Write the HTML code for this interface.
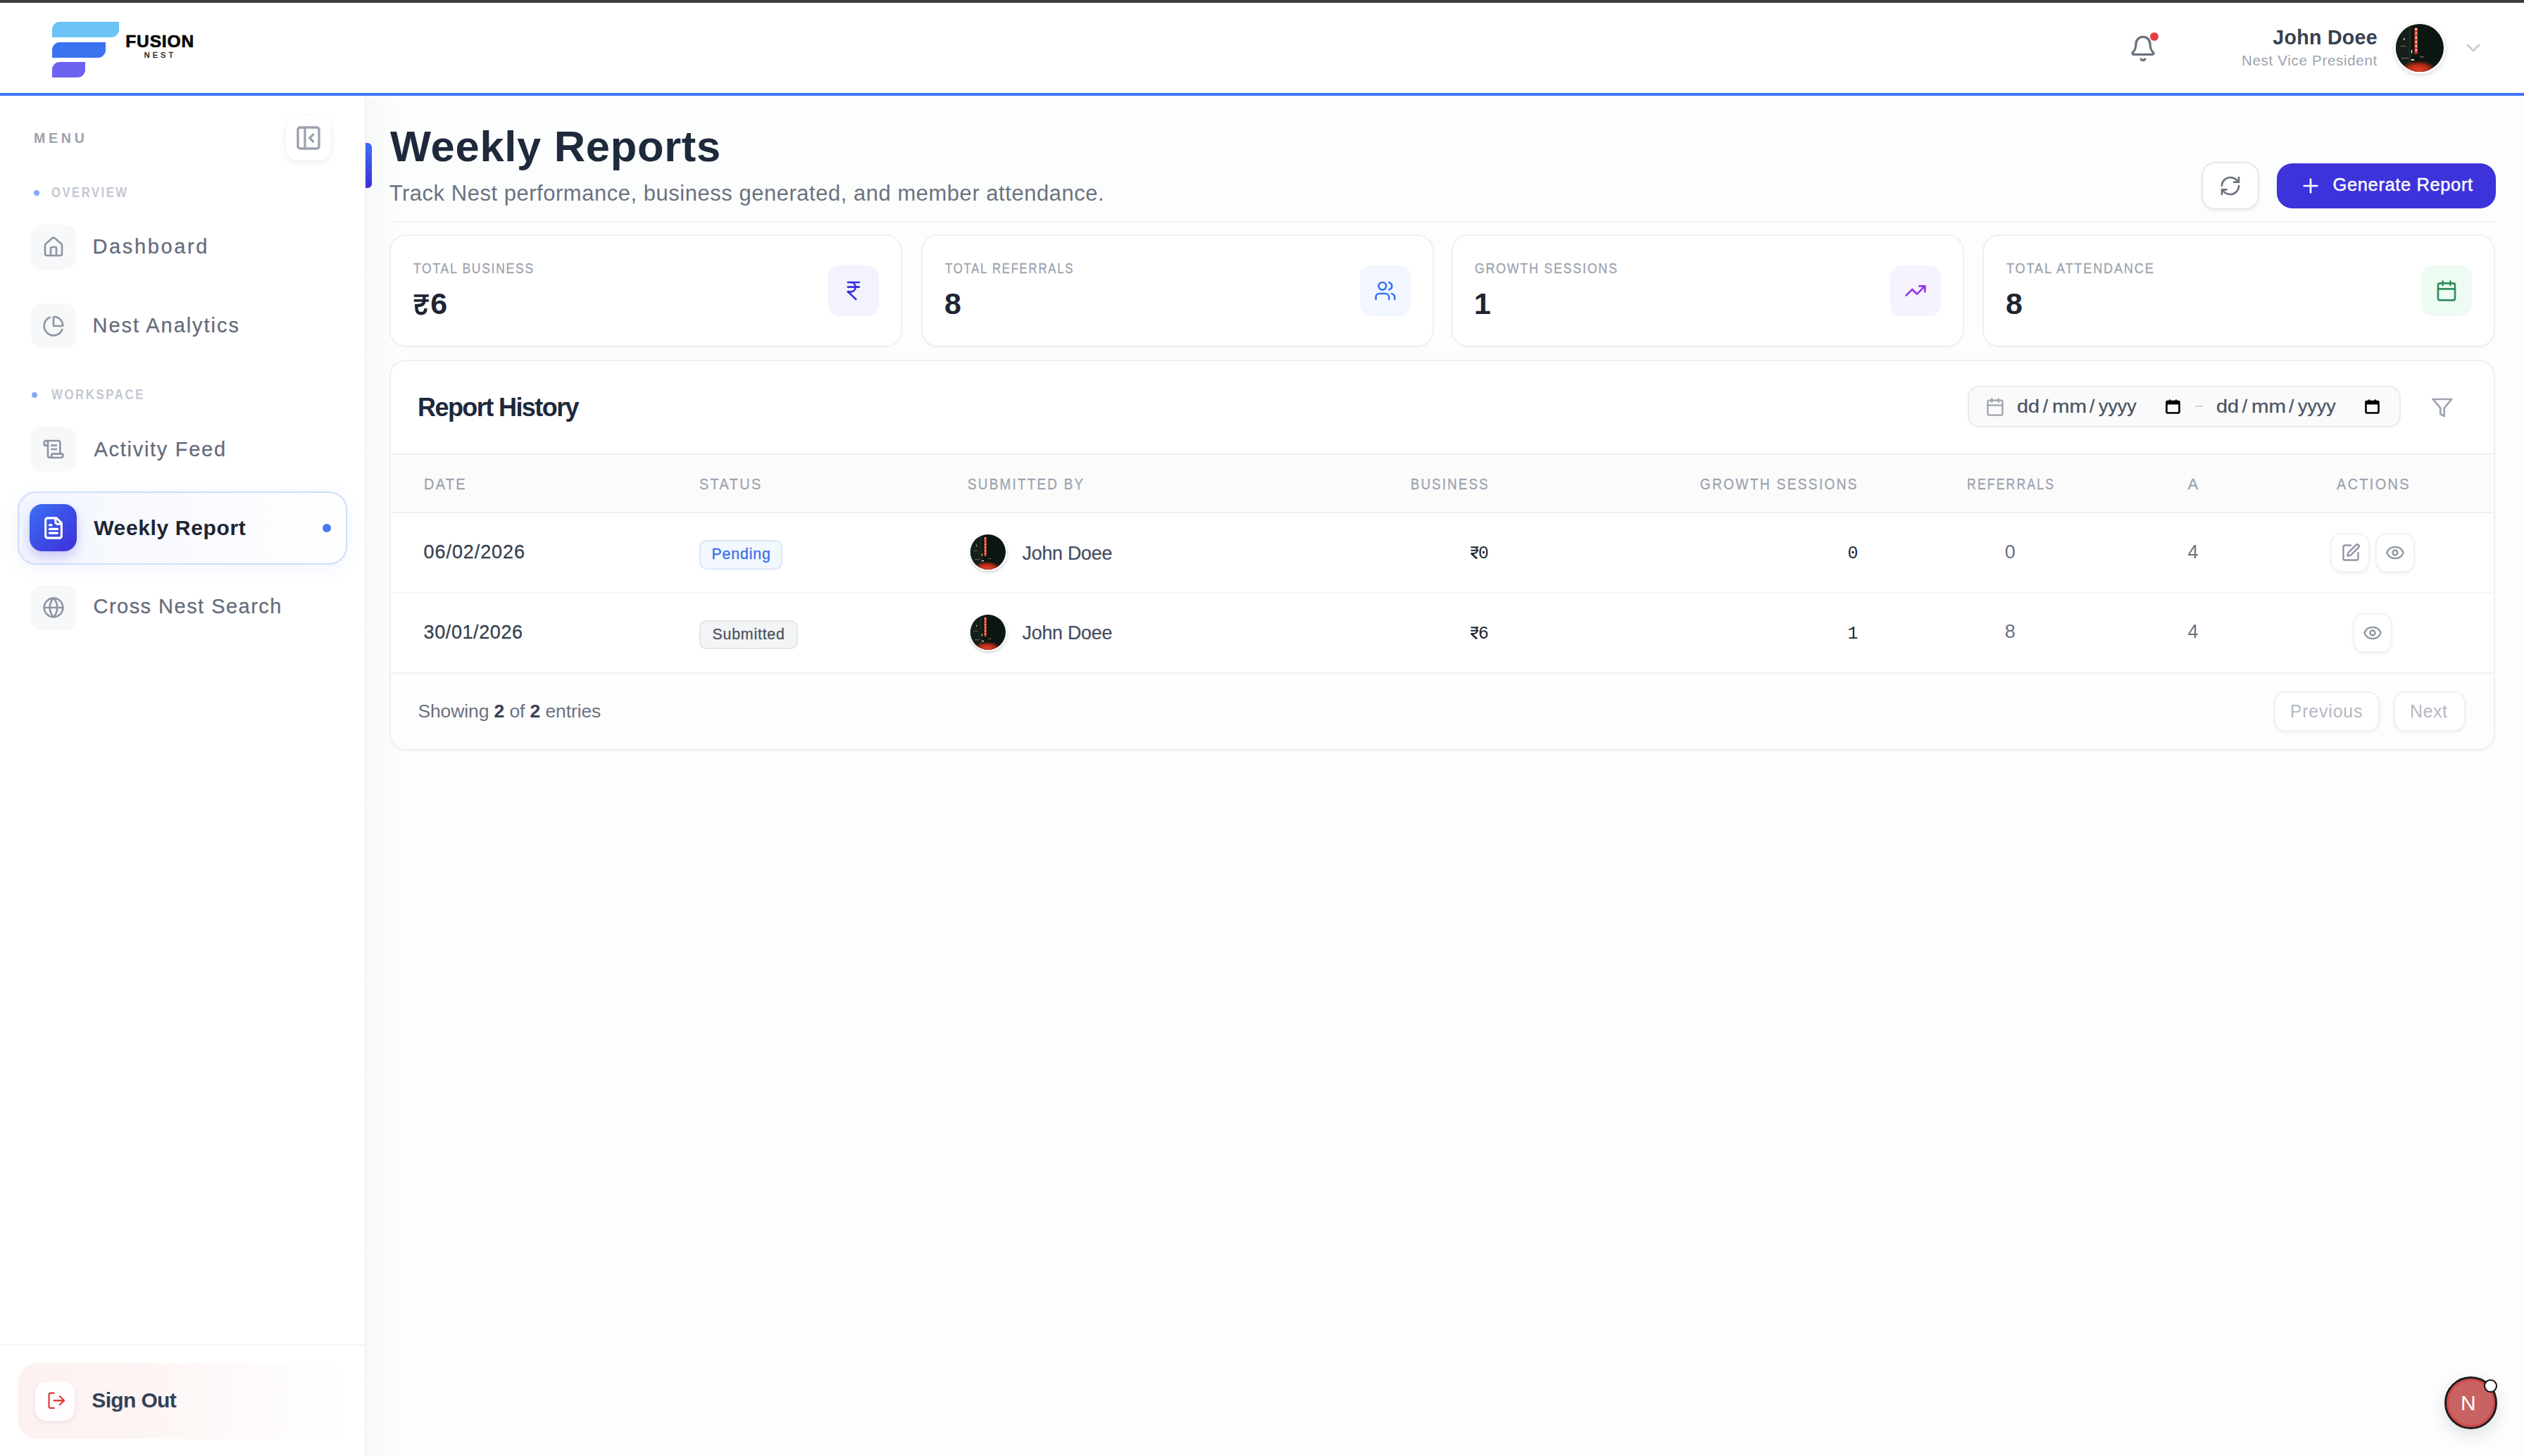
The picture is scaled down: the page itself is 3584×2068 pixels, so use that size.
<!DOCTYPE html>
<html><head><meta charset="utf-8"><title>Weekly Reports</title>
<style>
html,body{margin:0;padding:0;}
body{width:3584px;height:2068px;overflow:hidden;position:relative;background:#FCFDFD;font-family:'Liberation Sans', sans-serif;}
.t{position:absolute;white-space:nowrap;line-height:1;}
svg{display:block;}
</style></head><body>
<div style="position:absolute;left:0px;top:0px;width:3584px;height:4px;background:#3C3C3C"></div>
<div style="position:absolute;left:0px;top:4px;width:3584px;height:128px;background:#FFFFFF"></div>
<div style="position:absolute;left:0px;top:132px;width:3584px;height:4px;background:#3B72F6"></div>
<div style="position:absolute;left:0px;top:136px;width:518px;height:1932px;background:#FFFFFF"></div>
<div style="position:absolute;left:518px;top:136px;width:2px;height:1932px;background:#F1F2F4"></div>
<div style="position:absolute;left:520px;top:136px;width:48px;height:1932px;background:linear-gradient(90deg,rgba(0,0,0,0.02),rgba(0,0,0,0))"></div>
<div style="position:absolute;left:74px;top:31px;width:95px;height:22px;background:#6BC3F6;border-radius:11px 0 11px 0"></div>
<div style="position:absolute;left:74px;top:60px;width:76px;height:22px;background:#3B72F0;border-radius:11px 0 11px 0"></div>
<div style="position:absolute;left:74px;top:88px;width:47px;height:22px;background:#6C62F0;border-radius:11px 0 11px 0"></div>
<div style="position:absolute;left:406px;top:164px;width:64px;height:64px;background:#FFFFFF;border-radius:18px;box-shadow:0 3px 10px rgba(0,0,0,0.07),0 0 2px rgba(0,0,0,0.03)"></div>
<svg style="position:absolute;left:418.00px;top:176.00px;" width="40" height="40" viewBox="0 0 24 24" fill="none" stroke="#9CA3AF" stroke-width="2" stroke-linecap="round" stroke-linejoin="round"><rect width="18" height="18" x="3" y="3" rx="2"/><path d="M9 3v18"/><path d="m16 15-3-3 3-3"/></svg>
<div style="position:absolute;left:48px;top:270px;width:8px;height:8px;background:#86A9F7;border-radius:50%"></div>
<div style="position:absolute;left:45px;top:557px;width:8px;height:8px;background:#86A9F7;border-radius:50%"></div>
<div style="position:absolute;left:44px;top:319px;width:64px;height:64px;background:#F7F8F9;border-radius:16px"></div>
<svg style="position:absolute;left:60.00px;top:335.00px;" width="32" height="32" viewBox="0 0 24 24" fill="none" stroke="#8E95A3" stroke-width="2" stroke-linecap="round" stroke-linejoin="round"><path d="M15 21v-8a1 1 0 0 0-1-1h-4a1 1 0 0 0-1 1v8"/><path d="M3 10a2 2 0 0 1 .709-1.528l7-5.999a2 2 0 0 1 2.582 0l7 5.999A2 2 0 0 1 21 10v9a2 2 0 0 1-2 2H5a2 2 0 0 1-2-2z"/></svg>
<div style="position:absolute;left:44px;top:431px;width:64px;height:64px;background:#F7F8F9;border-radius:16px"></div>
<svg style="position:absolute;left:60.00px;top:447.00px;" width="32" height="32" viewBox="0 0 24 24" fill="none" stroke="#8E95A3" stroke-width="2" stroke-linecap="round" stroke-linejoin="round"><path d="M21 12c.552 0 1.005-.449.95-.998a10 10 0 0 0-8.953-8.951c-.55-.055-.998.398-.998.95v8a1 1 0 0 0 1 1z"/><path d="M21.21 15.89A10 10 0 1 1 8 2.83"/></svg>
<div style="position:absolute;left:44px;top:606px;width:64px;height:64px;background:#F7F8F9;border-radius:16px"></div>
<svg style="position:absolute;left:60.00px;top:622.00px;" width="32" height="32" viewBox="0 0 24 24" fill="none" stroke="#8E95A3" stroke-width="2" stroke-linecap="round" stroke-linejoin="round"><path d="M15 12h-5"/><path d="M15 8h-5"/><path d="M19 17V5a2 2 0 0 0-2-2H4"/><path d="M8 21h12a2 2 0 0 0 2-2v-1a1 1 0 0 0-1-1H11a1 1 0 0 0-1 1v1a2 2 0 1 1-4 0V5a2 2 0 1 0-4 0v2a1 1 0 0 0 1 1h3"/></svg>
<div style="position:absolute;left:44px;top:831px;width:64px;height:64px;background:#F7F8F9;border-radius:16px"></div>
<svg style="position:absolute;left:60.00px;top:847.00px;" width="32" height="32" viewBox="0 0 24 24" fill="none" stroke="#8E95A3" stroke-width="2" stroke-linecap="round" stroke-linejoin="round"><circle cx="12" cy="12" r="10"/><path d="M12 2a14.5 14.5 0 0 0 0 20 14.5 14.5 0 0 0 0-20"/><path d="M2 12h20"/></svg>
<div style="position:absolute;left:25px;top:698px;width:468px;height:104px;box-sizing:border-box;border:2px solid #D0DDFB;border-radius:26px;background:linear-gradient(90deg,#F3F6FE,#FAFBFF 60%,#FFFFFF);box-shadow:0 6px 24px rgba(59,114,246,0.07)"></div>
<div style="position:absolute;left:42px;top:716px;width:67px;height:67px;background:linear-gradient(135deg,#3C6EF3,#3F2FD8);border-radius:18px;box-shadow:0 8px 16px rgba(63,60,220,0.25)"></div>
<svg style="position:absolute;left:59.00px;top:732.70px;" width="34" height="34" viewBox="0 0 24 24" fill="none" stroke="#FFFFFF" stroke-width="2.2" stroke-linecap="round" stroke-linejoin="round"><path d="M15 2H6a2 2 0 0 0-2 2v16a2 2 0 0 0 2 2h12a2 2 0 0 0 2-2V7Z"/><path d="M14 2v4a2 2 0 0 0 2 2h4"/><path d="M10 9H8"/><path d="M16 13H8"/><path d="M16 17H8"/></svg>
<div style="position:absolute;left:458px;top:744px;width:12px;height:12px;background:#4A7AF2;border-radius:50%"></div>
<div style="position:absolute;left:0px;top:1909px;width:518px;height:2px;background:#F5F6F7"></div>
<div style="position:absolute;left:26px;top:1936px;width:467px;height:108px;border-radius:26px;background:linear-gradient(90deg,#FDF1F1 0%,#FDF6F5 45%,#FFFFFF 100%)"></div>
<div style="position:absolute;left:50px;top:1962px;width:56px;height:56px;background:#FFFDFD;border-radius:16px;box-shadow:0 2px 6px rgba(0,0,0,0.08)"></div>
<svg style="position:absolute;left:65.95px;top:1975.35px;" width="28.5" height="28.5" viewBox="0 0 24 24" fill="none" stroke="#E03B3B" stroke-width="1.9" stroke-linecap="round" stroke-linejoin="round"><path d="M9 21H5a2 2 0 0 1-2-2V5a2 2 0 0 1 2-2h4"/><polyline points="16 17 21 12 16 7"/><line x1="21" x2="9" y1="12" y2="12"/></svg>
<svg style="position:absolute;left:3023.00px;top:48.80px;" width="40" height="40" viewBox="0 0 24 24" fill="none" stroke="#6B7280" stroke-width="2" stroke-linecap="round" stroke-linejoin="round"><path d="M10.268 21a2 2 0 0 0 3.464 0"/><path d="M3.262 15.326A1 1 0 0 0 4 17h16a1 1 0 0 0 .74-1.673C19.41 13.956 18 12.499 18 8A6 6 0 0 0 6 8c0 4.499-1.411 5.956-2.738 7.326"/></svg>
<div style="position:absolute;left:3053px;top:46px;width:12px;height:12px;background:#E53E3E;border-radius:50%"></div>
<div style="position:absolute;left:3399.5px;top:31.5px;width:73.0px;height:73.0px;border-radius:50%;background:#fff;box-shadow:0 2px 6px rgba(0,0,0,0.15)"></div>
<svg style="position:absolute;left:3402px;top:34px" width="68" height="68" viewBox="0 0 68 68"><defs><clipPath id="avc1"><circle cx="34" cy="34" r="34"/></clipPath><radialGradient id="avg1" cx="0.5" cy="0.5" r="0.5"><stop offset="0" stop-color="#E04326"/><stop offset="0.55" stop-color="#B82A17"/><stop offset="1" stop-color="#B82A17" stop-opacity="0"/></radialGradient></defs><g clip-path="url(#avc1)"><rect width="68" height="68" fill="#0C1611"/><rect x="0" y="0" width="18" height="60" fill="#141F19"/><rect x="18" y="0" width="4" height="58" fill="#1D2823"/><rect x="6" y="31" width="9" height="1.2" fill="#7A5E48"/><rect x="8" y="48" width="10" height="1.2" fill="#8C6B55"/><rect x="11" y="20" width="1.5" height="3" fill="#D8D0C0"/><rect x="22" y="37" width="1.3" height="4.5" fill="#F0F0F0"/><rect x="22" y="50" width="4" height="2" fill="#E8E0D8"/><rect x="34" y="46" width="6" height="1.5" fill="#6E5A4A"/><rect x="26.5" y="5.5" width="4.5" height="37" rx="1" fill="#D93A2A"/><rect x="27.5" y="6" width="2.2" height="3" fill="#FFE6E0"/><rect x="27.8" y="12" width="2" height="2.5" fill="#FFD0C8"/><rect x="27.8" y="18" width="2" height="3" fill="#FFD8D0"/><rect x="27.8" y="24" width="2" height="3" fill="#FFD0C8"/><rect x="27.8" y="30" width="2" height="3" fill="#FFE0A0"/><rect x="27.8" y="36" width="2" height="2.5" fill="#FFD0C8"/><ellipse cx="32" cy="65" rx="26" ry="13" fill="url(#avg1)"/></g></svg>
<svg style="position:absolute;left:3496.10px;top:51.75px;" width="32" height="32" viewBox="0 0 24 24" fill="none" stroke="#C5CBD4" stroke-width="2" stroke-linecap="round" stroke-linejoin="round"><path d="m6 9 6 6 6-6"/></svg>
<div style="position:absolute;left:519px;top:203px;width:9px;height:64px;background:linear-gradient(180deg,#3B6FF3,#3A2ED8);border-radius:0 6px 6px 0"></div>
<div style="position:absolute;left:552px;top:314px;width:2991px;height:2px;background:#F1F2F4"></div>
<div style="position:absolute;left:3125.6px;top:230px;width:82.7px;height:67.5px;box-sizing:border-box;background:#FFFFFF;border:2px solid #E5E7EB;border-radius:20px;box-shadow:0 2px 4px rgba(0,0,0,0.06)"></div>
<svg style="position:absolute;left:3150.90px;top:247.75px;" width="32" height="32" viewBox="0 0 24 24" fill="none" stroke="#6B7280" stroke-width="2" stroke-linecap="round" stroke-linejoin="round"><path d="M3 12a9 9 0 0 1 9-9 9.75 9.75 0 0 1 6.74 2.74L21 8"/><path d="M21 3v5h-5"/><path d="M21 12a9 9 0 0 1-9 9 9.75 9.75 0 0 1-6.74-2.74L3 16"/><path d="M8 16H3v5"/></svg>
<div style="position:absolute;left:3233px;top:232px;width:311px;height:64px;background:#3D33DB;border-radius:22px"></div>
<svg style="position:absolute;left:3265.10px;top:248.00px;" width="32" height="32" viewBox="0 0 24 24" fill="none" stroke="#FFFFFF" stroke-width="2" stroke-linecap="round" stroke-linejoin="round"><path d="M5 12h14"/><path d="M12 5v14"/></svg>
<div style="position:absolute;left:553px;top:333px;width:728px;height:160px;box-sizing:border-box;background:#FFFFFF;border:2px solid #EEF0F2;border-radius:24px;box-shadow:0 1px 3px rgba(0,0,0,0.03)"></div>
<div style="position:absolute;left:1176px;top:377px;width:72px;height:72px;background:#F3F3FD;border-radius:16px"></div>
<svg style="position:absolute;left:1196.00px;top:397.00px;" width="32" height="32" viewBox="0 0 24 24" fill="none" stroke="#3A2FDB" stroke-width="2" stroke-linecap="round" stroke-linejoin="round"><path d="M6 3h12"/><path d="M6 8h12"/><path d="m6 13 8.5 8"/><path d="M6 13h3"/><path d="M9 13c6.667 0 6.667-10 0-10"/></svg>
<svg style="position:absolute;left:585px;top:416px" width="26" height="32" viewBox="0 0 26 32"><rect x="2.8" y="2.2" width="21" height="3.6" fill="#1E2533"/><rect x="2.8" y="9.1" width="21" height="3.6" fill="#1E2533"/><path d="M17.3 5V10.5C17.3 15 14.5 17.9 8.5 17.9H4.2" fill="none" stroke="#1E2533" stroke-width="4.4"/><path d="M6.5 17.5V22C6.5 27 8.8 29.2 13 29.2S19.5 26.5 19.5 22" fill="none" stroke="#1E2533" stroke-width="4.4"/></svg>
<div style="position:absolute;left:1308px;top:333px;width:728px;height:160px;box-sizing:border-box;background:#FFFFFF;border:2px solid #EEF0F2;border-radius:24px;box-shadow:0 1px 3px rgba(0,0,0,0.03)"></div>
<div style="position:absolute;left:1931px;top:377px;width:72px;height:72px;background:#F2F6FE;border-radius:16px"></div>
<svg style="position:absolute;left:1951.00px;top:397.00px;" width="32" height="32" viewBox="0 0 24 24" fill="none" stroke="#3B73F0" stroke-width="2" stroke-linecap="round" stroke-linejoin="round"><path d="M16 21v-2a4 4 0 0 0-4-4H6a4 4 0 0 0-4 4v2"/><circle cx="9" cy="7" r="4"/><path d="M22 21v-2a4 4 0 0 0-3-3.87"/><path d="M16 3.13a4 4 0 0 1 0 7.75"/></svg>
<div style="position:absolute;left:2061px;top:333px;width:728px;height:160px;box-sizing:border-box;background:#FFFFFF;border:2px solid #EEF0F2;border-radius:24px;box-shadow:0 1px 3px rgba(0,0,0,0.03)"></div>
<div style="position:absolute;left:2684px;top:377px;width:72px;height:72px;background:#F7F3FE;border-radius:16px"></div>
<svg style="position:absolute;left:2704.00px;top:397.00px;" width="32" height="32" viewBox="0 0 24 24" fill="none" stroke="#9333EA" stroke-width="2" stroke-linecap="round" stroke-linejoin="round"><polyline points="22 7 13.5 15.5 8.5 10.5 2 17"/><polyline points="16 7 22 7 22 13"/></svg>
<div style="position:absolute;left:2815px;top:333px;width:728px;height:160px;box-sizing:border-box;background:#FFFFFF;border:2px solid #EEF0F2;border-radius:24px;box-shadow:0 1px 3px rgba(0,0,0,0.03)"></div>
<div style="position:absolute;left:3438px;top:377px;width:72px;height:72px;background:#EEFBF3;border-radius:16px"></div>
<svg style="position:absolute;left:3458.00px;top:397.00px;" width="32" height="32" viewBox="0 0 24 24" fill="none" stroke="#2F8F5B" stroke-width="2" stroke-linecap="round" stroke-linejoin="round"><rect width="18" height="18" x="3" y="4" rx="2"/><path d="M16 2v4"/><path d="M8 2v4"/><path d="M3 10h18"/></svg>
<div style="position:absolute;left:553px;top:511px;width:2990px;height:555px;box-sizing:border-box;background:#FFFFFF;border:2px solid #EEF0F2;border-radius:24px;overflow:hidden;box-shadow:0 1px 3px rgba(0,0,0,0.03)"></div>
<div style="position:absolute;left:2794px;top:548px;width:615px;height:59px;box-sizing:border-box;background:#FAFAFB;border:2px solid #E9EBEE;border-radius:16px"></div>
<svg style="position:absolute;left:2818.75px;top:563.65px;" width="28" height="28" viewBox="0 0 24 24" fill="none" stroke="#9CA3AF" stroke-width="2" stroke-linecap="round" stroke-linejoin="round"><rect width="18" height="18" x="3" y="4" rx="2"/><path d="M16 2v4"/><path d="M8 2v4"/><path d="M3 10h18"/></svg>
<svg style="position:absolute;left:3074.5px;top:567px" width="21" height="21" viewBox="0 0 21 21"><rect x="1.5" y="3" width="18" height="16.5" rx="1.5" fill="none" stroke="#000" stroke-width="2.6"/><rect x="1.5" y="3" width="18" height="4.5" fill="#000"/><rect x="5" y="0.5" width="2.2" height="4" fill="#000"/><rect x="13.8" y="0.5" width="2.2" height="4" fill="#000"/></svg>
<svg style="position:absolute;left:3357.5px;top:567px" width="21" height="21" viewBox="0 0 21 21"><rect x="1.5" y="3" width="18" height="16.5" rx="1.5" fill="none" stroke="#000" stroke-width="2.6"/><rect x="1.5" y="3" width="18" height="4.5" fill="#000"/><rect x="5" y="0.5" width="2.2" height="4" fill="#000"/><rect x="13.8" y="0.5" width="2.2" height="4" fill="#000"/></svg>
<div style="position:absolute;left:3117px;top:576px;width:11px;height:2px;background:#D1D5DB"></div>
<svg style="position:absolute;left:3451.90px;top:562.55px;" width="32" height="32" viewBox="0 0 24 24" fill="none" stroke="#9CA3AF" stroke-width="2" stroke-linecap="round" stroke-linejoin="round"><polygon points="22 3 2 3 10 12.46 10 19 14 21 14 12.46 22 3"/></svg>
<div style="position:absolute;left:555px;top:645px;width:2986px;height:83px;background:#FBFBFC"></div>
<div style="position:absolute;left:555px;top:644px;width:2986px;height:2px;background:#EEF0F2"></div>
<div style="position:absolute;left:555px;top:727px;width:2986px;height:2px;background:#EEF0F2"></div>
<div style="position:absolute;left:555px;top:841px;width:2986px;height:2px;background:#F3F4F6"></div>
<div style="position:absolute;left:555px;top:955px;width:2986px;height:2px;background:#EEF0F2"></div>
<div style="position:absolute;left:555px;top:957px;width:2986px;height:107px;background:#FDFDFE;border-radius:0 0 22px 22px"></div>
<div style="position:absolute;left:993.2px;top:767.1999999999999px;width:117.39999999999986px;height:41.4px;box-sizing:border-box;border-radius:10px;background:#F3F7FE;border:2px solid #DCE7FC"></div>
<div style="position:absolute;left:1376.5px;top:757.8px;width:53.0px;height:53.0px;border-radius:50%;background:#fff;box-shadow:0 2px 4px rgba(0,0,0,0.18)"></div>
<svg style="position:absolute;left:1378px;top:759.3px" width="50" height="50" viewBox="0 0 68 68"><defs><clipPath id="avc2"><circle cx="34" cy="34" r="34"/></clipPath><radialGradient id="avg2" cx="0.5" cy="0.5" r="0.5"><stop offset="0" stop-color="#E04326"/><stop offset="0.55" stop-color="#B82A17"/><stop offset="1" stop-color="#B82A17" stop-opacity="0"/></radialGradient></defs><g clip-path="url(#avc2)"><rect width="68" height="68" fill="#0C1611"/><rect x="0" y="0" width="18" height="60" fill="#141F19"/><rect x="18" y="0" width="4" height="58" fill="#1D2823"/><rect x="6" y="31" width="9" height="1.2" fill="#7A5E48"/><rect x="8" y="48" width="10" height="1.2" fill="#8C6B55"/><rect x="11" y="20" width="1.5" height="3" fill="#D8D0C0"/><rect x="22" y="37" width="1.3" height="4.5" fill="#F0F0F0"/><rect x="22" y="50" width="4" height="2" fill="#E8E0D8"/><rect x="34" y="46" width="6" height="1.5" fill="#6E5A4A"/><rect x="26.5" y="5.5" width="4.5" height="37" rx="1" fill="#D93A2A"/><rect x="27.5" y="6" width="2.2" height="3" fill="#FFE6E0"/><rect x="27.8" y="12" width="2" height="2.5" fill="#FFD0C8"/><rect x="27.8" y="18" width="2" height="3" fill="#FFD8D0"/><rect x="27.8" y="24" width="2" height="3" fill="#FFD0C8"/><rect x="27.8" y="30" width="2" height="3" fill="#FFE0A0"/><rect x="27.8" y="36" width="2" height="2.5" fill="#FFD0C8"/><ellipse cx="32" cy="65" rx="26" ry="13" fill="url(#avg2)"/></g></svg>
<svg style="position:absolute;left:2087.5px;top:776.0px" width="12" height="18" viewBox="0 0 12 18"><path d="M0.5 1.2h11M0.5 5.8h11M0.5 10h4c3.5 0 5-2 5-4.4s-1.5-4.4-5-4.4" fill="none" stroke="#1F2937" stroke-width="2"/><path d="M1.2 10l8 7.5" stroke="#1F2937" stroke-width="2.6" fill="none"/></svg>
<div style="position:absolute;left:993.2px;top:881.0px;width:139.79999999999995px;height:41.4px;box-sizing:border-box;border-radius:10px;background:#F3F4F6;border:2px solid #E3E5E8"></div>
<div style="position:absolute;left:1376.5px;top:871.5px;width:53.0px;height:53.0px;border-radius:50%;background:#fff;box-shadow:0 2px 4px rgba(0,0,0,0.18)"></div>
<svg style="position:absolute;left:1378px;top:873px" width="50" height="50" viewBox="0 0 68 68"><defs><clipPath id="avc3"><circle cx="34" cy="34" r="34"/></clipPath><radialGradient id="avg3" cx="0.5" cy="0.5" r="0.5"><stop offset="0" stop-color="#E04326"/><stop offset="0.55" stop-color="#B82A17"/><stop offset="1" stop-color="#B82A17" stop-opacity="0"/></radialGradient></defs><g clip-path="url(#avc3)"><rect width="68" height="68" fill="#0C1611"/><rect x="0" y="0" width="18" height="60" fill="#141F19"/><rect x="18" y="0" width="4" height="58" fill="#1D2823"/><rect x="6" y="31" width="9" height="1.2" fill="#7A5E48"/><rect x="8" y="48" width="10" height="1.2" fill="#8C6B55"/><rect x="11" y="20" width="1.5" height="3" fill="#D8D0C0"/><rect x="22" y="37" width="1.3" height="4.5" fill="#F0F0F0"/><rect x="22" y="50" width="4" height="2" fill="#E8E0D8"/><rect x="34" y="46" width="6" height="1.5" fill="#6E5A4A"/><rect x="26.5" y="5.5" width="4.5" height="37" rx="1" fill="#D93A2A"/><rect x="27.5" y="6" width="2.2" height="3" fill="#FFE6E0"/><rect x="27.8" y="12" width="2" height="2.5" fill="#FFD0C8"/><rect x="27.8" y="18" width="2" height="3" fill="#FFD8D0"/><rect x="27.8" y="24" width="2" height="3" fill="#FFD0C8"/><rect x="27.8" y="30" width="2" height="3" fill="#FFE0A0"/><rect x="27.8" y="36" width="2" height="2.5" fill="#FFD0C8"/><ellipse cx="32" cy="65" rx="26" ry="13" fill="url(#avg3)"/></g></svg>
<svg style="position:absolute;left:2087.5px;top:889.7px" width="12" height="18" viewBox="0 0 12 18"><path d="M0.5 1.2h11M0.5 5.8h11M0.5 10h4c3.5 0 5-2 5-4.4s-1.5-4.4-5-4.4" fill="none" stroke="#1F2937" stroke-width="2"/><path d="M1.2 10l8 7.5" stroke="#1F2937" stroke-width="2.6" fill="none"/></svg>
<div style="position:absolute;left:3309px;top:757px;width:56px;height:56px;box-sizing:border-box;background:#FFFFFF;border:2px solid #F1F2F4;border-radius:16px;box-shadow:0 2px 4px rgba(0,0,0,0.06)"></div>
<svg style="position:absolute;left:3323.75px;top:770.75px;" width="28" height="28" viewBox="0 0 24 24" fill="none" stroke="#8E95A3" stroke-width="2" stroke-linecap="round" stroke-linejoin="round"><path d="M12 3H5a2 2 0 0 0-2 2v14a2 2 0 0 0 2 2h14a2 2 0 0 0 2-2v-7"/><path d="M18.375 2.625a1 1 0 0 1 3 3l-9.013 9.014a2 2 0 0 1-.853.505l-2.873.84a.5.5 0 0 1-.62-.62l.84-2.873a2 2 0 0 1 .506-.852z"/></svg>
<div style="position:absolute;left:3373px;top:757px;width:56px;height:56px;box-sizing:border-box;background:#FFFFFF;border:2px solid #F1F2F4;border-radius:16px;box-shadow:0 2px 4px rgba(0,0,0,0.06)"></div>
<svg style="position:absolute;left:3387.15px;top:771.00px;" width="28" height="28" viewBox="0 0 24 24" fill="none" stroke="#8E95A3" stroke-width="2" stroke-linecap="round" stroke-linejoin="round"><path d="M2.062 12.348a1 1 0 0 1 0-.696 10.75 10.75 0 0 1 19.876 0 1 1 0 0 1 0 .696 10.75 10.75 0 0 1-19.876 0"/><circle cx="12" cy="12" r="3"/></svg>
<div style="position:absolute;left:3341px;top:871px;width:56px;height:56px;box-sizing:border-box;background:#FFFFFF;border:2px solid #F1F2F4;border-radius:16px;box-shadow:0 2px 4px rgba(0,0,0,0.06)"></div>
<svg style="position:absolute;left:3355.15px;top:885.00px;" width="28" height="28" viewBox="0 0 24 24" fill="none" stroke="#8E95A3" stroke-width="2" stroke-linecap="round" stroke-linejoin="round"><path d="M2.062 12.348a1 1 0 0 1 0-.696 10.75 10.75 0 0 1 19.876 0 1 1 0 0 1 0 .696 10.75 10.75 0 0 1-19.876 0"/><circle cx="12" cy="12" r="3"/></svg>
<div style="position:absolute;left:3229px;top:982px;width:150px;height:57px;box-sizing:border-box;background:#FFFFFF;border:2px solid #EEF0F2;border-radius:16px;box-shadow:0 2px 4px rgba(0,0,0,0.06)"></div>
<div style="position:absolute;left:3398.6px;top:982px;width:102px;height:57px;box-sizing:border-box;background:#FFFFFF;border:2px solid #EEF0F2;border-radius:16px;box-shadow:0 2px 4px rgba(0,0,0,0.06)"></div>
<div style="position:absolute;left:3470.5px;top:1954.5px;width:75px;height:75px;box-sizing:border-box;border-radius:50%;background:#C96262;border:3px solid #1C1C1C;box-shadow:inset 0 0 0 3px #D24848,0 8px 24px rgba(0,0,0,0.12)"></div>
<div style="position:absolute;left:3526.5px;top:1958.5px;width:19px;height:19px;box-sizing:border-box;border-radius:50%;background:#FFFFFF;border:2px solid #111"></div>
<div class="t" style="left:178.30px;top:47.10px;font-size:24.5px;font-weight:700;color:#0A0A0A;letter-spacing:0.847px;font-family:'Liberation Sans', sans-serif;-webkit-text-stroke:0.7px;">FUSION</div>
<div class="t" style="left:204.70px;top:72.80px;font-size:10.8px;font-weight:400;color:#2A2A2A;letter-spacing:4.167px;font-family:'Liberation Sans', sans-serif;-webkit-text-stroke:0.5px;">NEST</div>
<div class="t" style="left:47.75px;top:186.20px;font-size:20.5px;font-weight:700;color:#9CA3AF;letter-spacing:5.000px;font-family:'Liberation Sans', sans-serif;transform:scaleX(0.9530);transform-origin:0 0;">MENU</div>
<div class="t" style="left:72.50px;top:263.50px;font-size:19.5px;font-weight:700;color:#C3C8D1;letter-spacing:3.000px;font-family:'Liberation Sans', sans-serif;transform:scaleX(0.8509);transform-origin:0 0;">OVERVIEW</div>
<div class="t" style="left:72.50px;top:551.00px;font-size:19.5px;font-weight:700;color:#C3C8D1;letter-spacing:3.000px;font-family:'Liberation Sans', sans-serif;transform:scaleX(0.8616);transform-origin:0 0;">WORKSPACE</div>
<div class="t" style="left:131.50px;top:336.00px;font-size:29px;font-weight:400;color:#646B7B;letter-spacing:2.632px;font-family:'Liberation Sans', sans-serif;-webkit-text-stroke:0.25px">Dashboard</div>
<div class="t" style="left:131.50px;top:448.20px;font-size:29px;font-weight:400;color:#646B7B;letter-spacing:1.944px;font-family:'Liberation Sans', sans-serif;-webkit-text-stroke:0.25px">Nest Analytics</div>
<div class="t" style="left:133.50px;top:623.50px;font-size:29px;font-weight:400;color:#646B7B;letter-spacing:1.711px;font-family:'Liberation Sans', sans-serif;-webkit-text-stroke:0.25px">Activity Feed</div>
<div class="t" style="left:132.50px;top:847.40px;font-size:29px;font-weight:400;color:#646B7B;letter-spacing:1.473px;font-family:'Liberation Sans', sans-serif;-webkit-text-stroke:0.25px">Cross Nest Search</div>
<div class="t" style="left:133.20px;top:734.70px;font-size:30px;font-weight:700;color:#1E2533;letter-spacing:0.637px;font-family:'Liberation Sans', sans-serif;">Weekly Report</div>
<div class="t" style="left:130.30px;top:1974.00px;font-size:30px;font-weight:700;color:#334155;letter-spacing:-0.641px;font-family:'Liberation Sans', sans-serif;">Sign Out</div>
<div class="t" style="left:3227.20px;top:38.80px;font-size:28.6px;font-weight:700;color:#374151;letter-spacing:0.292px;font-family:'Liberation Sans', sans-serif;">John Doee</div>
<div class="t" style="left:3183.00px;top:75.70px;font-size:20.5px;font-weight:400;color:#9CA3AF;letter-spacing:0.697px;font-family:'Liberation Sans', sans-serif;">Nest Vice President</div>
<div class="t" style="left:554.00px;top:177.40px;font-size:61.5px;font-weight:700;color:#1E293B;letter-spacing:0.686px;font-family:'Liberation Sans', sans-serif;">Weekly Reports</div>
<div class="t" style="left:552.70px;top:259.00px;font-size:31px;font-weight:400;color:#6B7280;letter-spacing:0.521px;font-family:'Liberation Sans', sans-serif;">Track Nest performance, business generated, and member attendance.</div>
<div class="t" style="left:3312.60px;top:250.30px;font-size:25.5px;font-weight:400;color:#FFFFFF;letter-spacing:0.610px;font-family:'Liberation Sans', sans-serif;-webkit-text-stroke:0.45px">Generate Report</div>
<div class="t" style="left:586.80px;top:371.00px;font-size:20.2px;font-weight:400;color:#9CA3AF;letter-spacing:2.000px;font-family:'Liberation Sans', sans-serif;-webkit-text-stroke:0.3px;transform:scaleX(0.8670);transform-origin:0 0;">TOTAL BUSINESS</div>
<div class="t" style="left:611.30px;top:409.80px;font-size:43px;font-weight:700;color:#1E2533;letter-spacing:0.000px;font-family:'Liberation Sans', sans-serif;">6</div>
<div class="t" style="left:1341.80px;top:371.00px;font-size:20.2px;font-weight:400;color:#9CA3AF;letter-spacing:2.000px;font-family:'Liberation Sans', sans-serif;-webkit-text-stroke:0.3px;transform:scaleX(0.8354);transform-origin:0 0;">TOTAL REFERRALS</div>
<div class="t" style="left:1341.00px;top:409.80px;font-size:43px;font-weight:700;color:#1E2533;letter-spacing:0.000px;font-family:'Liberation Sans', sans-serif;">8</div>
<div class="t" style="left:2093.92px;top:371.00px;font-size:20.2px;font-weight:400;color:#9CA3AF;letter-spacing:2.000px;font-family:'Liberation Sans', sans-serif;-webkit-text-stroke:0.3px;transform:scaleX(0.8834);transform-origin:0 0;">GROWTH SESSIONS</div>
<div class="t" style="left:2093.00px;top:409.80px;font-size:43px;font-weight:700;color:#1E2533;letter-spacing:0.000px;font-family:'Liberation Sans', sans-serif;">1</div>
<div class="t" style="left:2848.80px;top:371.00px;font-size:20.2px;font-weight:400;color:#9CA3AF;letter-spacing:2.000px;font-family:'Liberation Sans', sans-serif;-webkit-text-stroke:0.3px;transform:scaleX(0.8987);transform-origin:0 0;">TOTAL ATTENDANCE</div>
<div class="t" style="left:2848.00px;top:409.80px;font-size:43px;font-weight:700;color:#1E2533;letter-spacing:0.000px;font-family:'Liberation Sans', sans-serif;">8</div>
<div class="t" style="left:593.00px;top:561.00px;font-size:36px;font-weight:700;color:#1E293B;letter-spacing:-1.570px;font-family:'Liberation Sans', sans-serif;">Report History</div>
<div class="t" style="left:2864.31px;top:563.70px;font-size:26.5px;font-weight:400;color:#4B5563;letter-spacing:0.000px;font-family:'Liberation Sans', sans-serif;-webkit-text-stroke:0.3px;transform:scaleX(1.0888);transform-origin:0 0;">dd</div>
<div class="t" style="left:2900.80px;top:563.70px;font-size:26.5px;font-weight:400;color:#4B5563;letter-spacing:0.000px;font-family:'Liberation Sans', sans-serif;-webkit-text-stroke:0.3px;">/</div>
<div class="t" style="left:2914.09px;top:563.70px;font-size:26.5px;font-weight:400;color:#4B5563;letter-spacing:0.000px;font-family:'Liberation Sans', sans-serif;-webkit-text-stroke:0.3px;transform:scaleX(1.1123);transform-origin:0 0;">mm</div>
<div class="t" style="left:2967.00px;top:563.70px;font-size:26.5px;font-weight:400;color:#4B5563;letter-spacing:0.000px;font-family:'Liberation Sans', sans-serif;-webkit-text-stroke:0.3px;">/</div>
<div class="t" style="left:2980.30px;top:563.70px;font-size:26.5px;font-weight:400;color:#4B5563;letter-spacing:0.000px;font-family:'Liberation Sans', sans-serif;-webkit-text-stroke:0.3px;transform:scaleX(1.0140);transform-origin:0 0;">yyyy</div>
<div class="t" style="left:3147.31px;top:563.70px;font-size:26.5px;font-weight:400;color:#4B5563;letter-spacing:0.000px;font-family:'Liberation Sans', sans-serif;-webkit-text-stroke:0.3px;transform:scaleX(1.0888);transform-origin:0 0;">dd</div>
<div class="t" style="left:3183.80px;top:563.70px;font-size:26.5px;font-weight:400;color:#4B5563;letter-spacing:0.000px;font-family:'Liberation Sans', sans-serif;-webkit-text-stroke:0.3px;">/</div>
<div class="t" style="left:3197.09px;top:563.70px;font-size:26.5px;font-weight:400;color:#4B5563;letter-spacing:0.000px;font-family:'Liberation Sans', sans-serif;-webkit-text-stroke:0.3px;transform:scaleX(1.1123);transform-origin:0 0;">mm</div>
<div class="t" style="left:3250.00px;top:563.70px;font-size:26.5px;font-weight:400;color:#4B5563;letter-spacing:0.000px;font-family:'Liberation Sans', sans-serif;-webkit-text-stroke:0.3px;">/</div>
<div class="t" style="left:3263.30px;top:563.70px;font-size:26.5px;font-weight:400;color:#4B5563;letter-spacing:0.000px;font-family:'Liberation Sans', sans-serif;-webkit-text-stroke:0.3px;transform:scaleX(1.0140);transform-origin:0 0;">yyyy</div>
<div class="t" style="left:601.70px;top:676.50px;font-size:22.2px;font-weight:400;color:#9CA3AF;letter-spacing:2.600px;font-family:'Liberation Sans', sans-serif;-webkit-text-stroke:0.3px;transform:scaleX(0.8973);transform-origin:0 0;">DATE</div>
<div class="t" style="left:992.70px;top:676.50px;font-size:22.2px;font-weight:400;color:#9CA3AF;letter-spacing:2.600px;font-family:'Liberation Sans', sans-serif;-webkit-text-stroke:0.3px;transform:scaleX(0.8970);transform-origin:0 0;">STATUS</div>
<div class="t" style="left:1374.15px;top:676.50px;font-size:22.2px;font-weight:400;color:#9CA3AF;letter-spacing:2.600px;font-family:'Liberation Sans', sans-serif;-webkit-text-stroke:0.3px;transform:scaleX(0.8526);transform-origin:0 0;">SUBMITTED BY</div>
<div class="t" style="left:2003.16px;top:676.50px;font-size:22.2px;font-weight:400;color:#9CA3AF;letter-spacing:2.600px;font-family:'Liberation Sans', sans-serif;-webkit-text-stroke:0.3px;transform:scaleX(0.8421);transform-origin:0 0;">BUSINESS</div>
<div class="t" style="left:2413.93px;top:676.50px;font-size:22.2px;font-weight:400;color:#9CA3AF;letter-spacing:2.600px;font-family:'Liberation Sans', sans-serif;-webkit-text-stroke:0.3px;transform:scaleX(0.8662);transform-origin:0 0;">GROWTH SESSIONS</div>
<div class="t" style="left:2792.50px;top:676.50px;font-size:22.2px;font-weight:400;color:#9CA3AF;letter-spacing:2.600px;font-family:'Liberation Sans', sans-serif;-webkit-text-stroke:0.3px;transform:scaleX(0.7992);transform-origin:0 0;">REFERRALS</div>
<div class="t" style="left:3106.50px;top:676.50px;font-size:22.2px;font-weight:400;color:#9CA3AF;letter-spacing:2.600px;font-family:'Liberation Sans', sans-serif;-webkit-text-stroke:0.3px;">A</div>
<div class="t" style="left:3318.40px;top:676.50px;font-size:22.2px;font-weight:400;color:#9CA3AF;letter-spacing:2.600px;font-family:'Liberation Sans', sans-serif;-webkit-text-stroke:0.3px;transform:scaleX(0.8984);transform-origin:0 0;">ACTIONS</div>
<div class="t" style="left:601.60px;top:771.30px;font-size:27px;font-weight:400;color:#374151;letter-spacing:0.920px;font-family:'Liberation Sans', sans-serif;-webkit-text-stroke:0.3px">06/02/2026</div>
<div class="t" style="left:1010.50px;top:777.00px;font-size:21.4px;font-weight:400;color:#3B6FE6;letter-spacing:0.816px;font-family:'Liberation Sans', sans-serif;-webkit-text-stroke:0.3px">Pending</div>
<div class="t" style="left:1451.60px;top:772.60px;font-size:27px;font-weight:400;color:#454E5E;letter-spacing:-0.348px;font-family:'Liberation Sans', sans-serif;-webkit-text-stroke:0.2px;">John Doee</div>
<div class="t" style="left:2099.00px;top:774.10px;font-size:25px;font-weight:400;color:#1F2937;letter-spacing:0.000px;font-family:'Liberation Mono', monospace;">0</div>
<div class="t" style="left:2623.50px;top:774.10px;font-size:25px;font-weight:400;color:#1F2937;letter-spacing:0.000px;font-family:'Liberation Mono', monospace;">0</div>
<div class="t" style="left:2846.70px;top:770.70px;font-size:27px;font-weight:400;color:#6B7280;letter-spacing:0.000px;font-family:'Liberation Sans', sans-serif;">0</div>
<div class="t" style="left:3106.50px;top:770.70px;font-size:27px;font-weight:400;color:#6B7280;letter-spacing:0.000px;font-family:'Liberation Sans', sans-serif;">4</div>
<div class="t" style="left:601.60px;top:885.00px;font-size:27px;font-weight:400;color:#374151;letter-spacing:0.587px;font-family:'Liberation Sans', sans-serif;-webkit-text-stroke:0.3px">30/01/2026</div>
<div class="t" style="left:1011.50px;top:890.70px;font-size:21.4px;font-weight:400;color:#4B5563;letter-spacing:0.761px;font-family:'Liberation Sans', sans-serif;-webkit-text-stroke:0.3px">Submitted</div>
<div class="t" style="left:1451.60px;top:886.30px;font-size:27px;font-weight:400;color:#454E5E;letter-spacing:-0.348px;font-family:'Liberation Sans', sans-serif;-webkit-text-stroke:0.2px;">John Doee</div>
<div class="t" style="left:2099.00px;top:887.80px;font-size:25px;font-weight:400;color:#1F2937;letter-spacing:0.000px;font-family:'Liberation Mono', monospace;">6</div>
<div class="t" style="left:2623.50px;top:887.80px;font-size:25px;font-weight:400;color:#1F2937;letter-spacing:0.000px;font-family:'Liberation Mono', monospace;">1</div>
<div class="t" style="left:2846.70px;top:884.40px;font-size:27px;font-weight:400;color:#6B7280;letter-spacing:0.000px;font-family:'Liberation Sans', sans-serif;">8</div>
<div class="t" style="left:3106.50px;top:884.40px;font-size:27px;font-weight:400;color:#6B7280;letter-spacing:0.000px;font-family:'Liberation Sans', sans-serif;">4</div>
<div class="t" style="left:593.40px;top:997.00px;font-size:26.5px;font-weight:400;color:#6B7280;letter-spacing:-0.113px;font-family:'Liberation Sans', sans-serif;">Showing <b style="color:#374151">2</b> of <b style="color:#374151">2</b> entries</div>
<div class="t" style="left:3251.80px;top:998.00px;font-size:25px;font-weight:400;color:#B4B9C2;letter-spacing:0.776px;font-family:'Liberation Sans', sans-serif;">Previous</div>
<div class="t" style="left:3422.00px;top:998.00px;font-size:25px;font-weight:400;color:#B4B9C2;letter-spacing:0.481px;font-family:'Liberation Sans', sans-serif;">Next</div>
<div class="t" style="left:3494.00px;top:1978.00px;font-size:30px;font-weight:400;color:#FFFFFF;letter-spacing:0.000px;font-family:'Liberation Sans', sans-serif;">N</div>
</body></html>
